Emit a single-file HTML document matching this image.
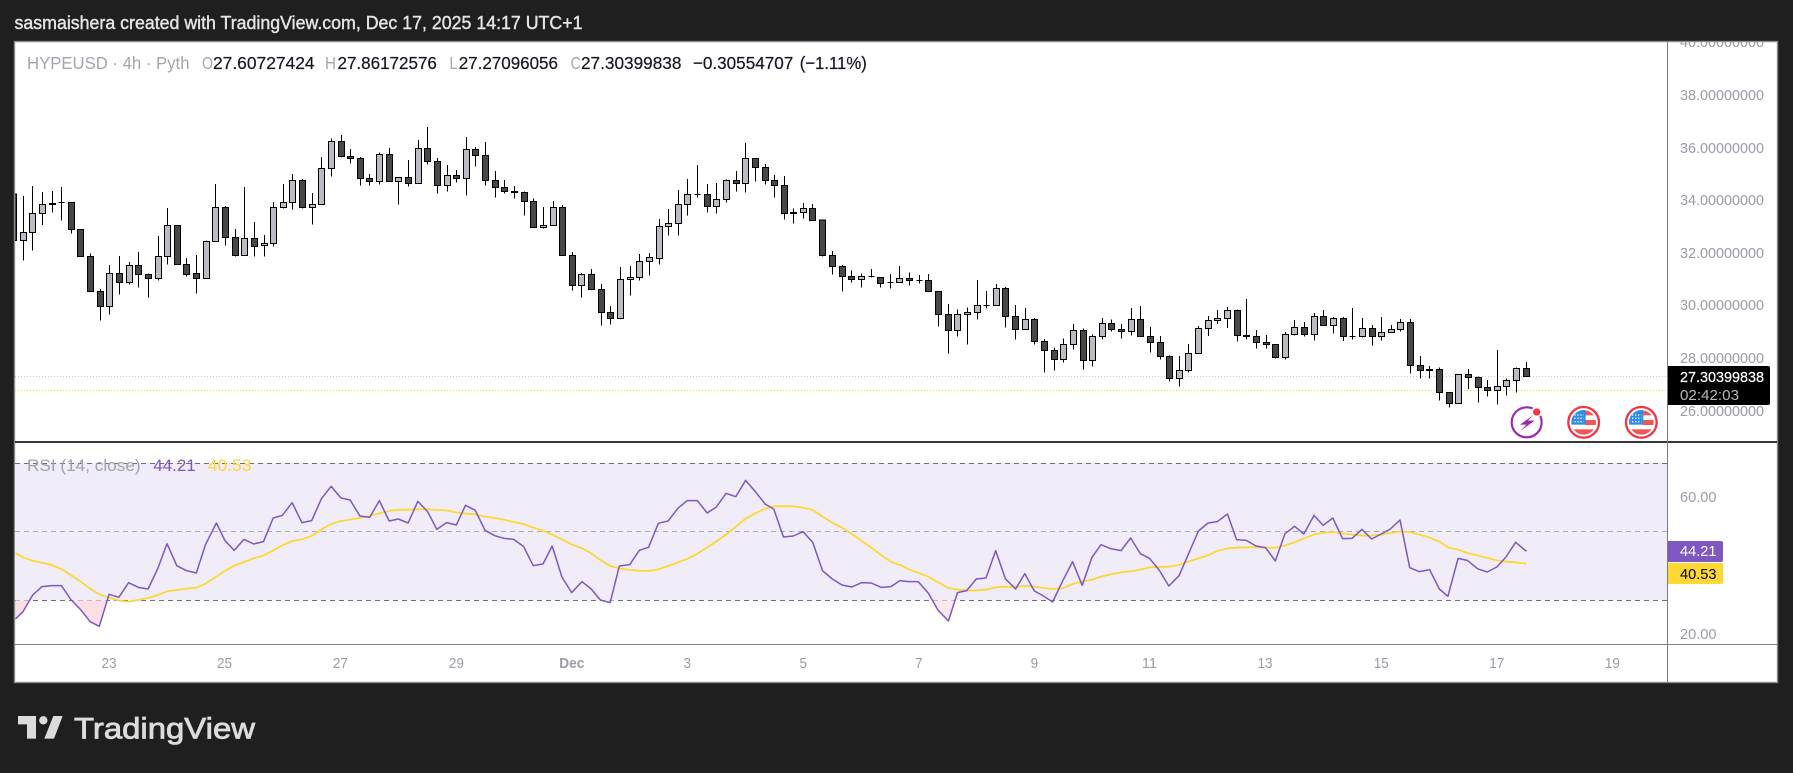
<!DOCTYPE html>
<html lang="en"><head><meta charset="utf-8"><title>HYPEUSD chart</title>
<style>
html,body{margin:0;padding:0;background:#1f1f1f;width:1793px;height:773px;overflow:hidden}
svg{display:block}
text{font-family:"Liberation Sans",sans-serif}
.ax{font-size:15px;fill:#9a9ca6}
.lg{font-size:17.5px;fill:#a4a6af}
.v{font-size:17.5px;fill:#131722;stroke:#131722;stroke-width:.2}
.w{stroke:#000;stroke-width:3;fill:none}
.d{fill:#474747;stroke:#000;stroke-width:3}
.l{fill:#babbc4;stroke:#000;stroke-width:3}
.rsi{fill:none;stroke:#7e57c2;stroke-width:1.5;vector-effect:non-scaling-stroke;stroke-linejoin:round}
.ma{fill:none;stroke:#fdd835;stroke-width:1.8;vector-effect:non-scaling-stroke;stroke-linejoin:round}
</style></head><body>
<svg width="1793" height="773" viewBox="0 0 1793 773" xmlns="http://www.w3.org/2000/svg">
<defs>
<clipPath id="m"><rect x="15" y="42" width="1652" height="400"/></clipPath>
<clipPath id="r"><rect x="15" y="443" width="1652" height="201"/></clipPath>
<clipPath id="a"><rect x="1668" y="42" width="109" height="400"/></clipPath>
<clipPath id="f1"><circle cx="311" cy="247" r="37"/></clipPath>
<clipPath id="f2"><circle cx="484" cy="247" r="37"/></clipPath>
</defs>
<rect width="1793" height="773" fill="#1f1f1f"/>
<text x="14.5" y="29" font-size="18" font-weight="400" fill="#e6e6e6" stroke="#e6e6e6" stroke-width=".4" textLength="568" lengthAdjust="spacingAndGlyphs">sasmaishera created with TradingView.com, Dec 17, 2025 14:17 UTC+1</text>
<rect x="14.5" y="41.5" width="1763" height="641" fill="#fff" stroke="#8a8a8a" stroke-width="1.4"/>

<rect x="15" y="463" width="1652" height="137" fill="#f0edf8"/>
<g stroke-width="1" shape-rendering="crispEdges">
<line x1="15" x2="1667" y1="376.5" y2="376.5" stroke="#c8c8c8" stroke-dasharray="1 2"/>
<line x1="15" x2="1667" y1="390.5" y2="390.5" stroke="#f2e600" stroke-dasharray="1 2"/>
<line x1="15" x2="1667" y1="463.5" y2="463.5" stroke="#6f6d80" stroke-dasharray="5 4"/>
<line x1="15" x2="1667" y1="531.5" y2="531.5" stroke="#a9a9b5" stroke-dasharray="5 4"/>
<line x1="15" x2="1667" y1="600.5" y2="600.5" stroke="#6f6d80" stroke-dasharray="5 4"/>
</g>

<g clip-path="url(#m)" shape-rendering="crispEdges">
<g transform="translate(14 120) scale(.33333)">
<path class="w" d="M28 228V422M55 198V392M85 216V315M115 213V278M142 201V302M172 246V341M229 400V515M259 507V602M286 435V584M316 408V524M346 426V494M373 396V503M403 460V533M433 348V482M460 264V434M517 414V469M547 405V521M577 361V364M604 192V262M634 258V377M664 327V410M691 201V355M721 306V410M751 345V410M778 246V380M808 192V266M835 162V269M865 177V266M895 219V314M922 111V145M952 55V170M982 45V113M1009 87V131M1039 111V197M1066 162V197M1096 97V194M1126 84V184M1153 172V254M1183 120V200M133 247h18"/>
<path class="d" d="M-11 222h18V362h-18zM163 247h18V328h-18zM190 328h18V409h-18zM220 409h18V514h-18zM250 514h18V559h-18zM307 460h18V487h-18zM364 436h18V463h-18zM394 463h18V475h-18zM481 316h18V433h-18zM508 433h18V463h-18zM538 460h18V475h-18zM625 262h18V352h-18zM655 352h18V406h-18zM712 355h18V379h-18zM856 181h18V262h-18zM973 64h18V109h-18zM1000 109h18V115h-18zM1030 115h18V175h-18zM1057 175h18V184h-18zM1117 103h18V184h-18zM1174 172h18V190h-18zM106 251h18V253h-18z"/>
<path class="l" d="M19 337h18V361h-18zM46 280h18V337h-18zM76 253h18V280h-18zM277 460h18V559h-18zM337 436h18V487h-18zM424 409h18V475h-18zM451 316h18V409h-18zM568 364h18V475h-18zM595 262h18V364h-18zM682 355h18V406h-18zM742 371h18V376h-18zM769 262h18V370h-18zM799 247h18V262h-18zM826 181h18V247h-18zM886 253h18V262h-18zM913 145h18V253h-18zM943 64h18V145h-18zM1087 103h18V184h-18zM1144 172h18V184h-18z"/>
</g>
<g transform="translate(414 120) scale(.33333)">
<path class="w" d="M13 60V85M40 21V134M70 114V221M100 135V215M127 150V188M157 51V227M184 81V140M214 66V197M244 153V233M271 180V221M301 198V236M331 214V287M358 235V244M388 261V326M418 243V262M445 255V262M475 396V512M502 459V533M532 447V463M562 492V617M589 558V614M619 441V478M649 438V527M676 402V482M706 399V467M736 297V434M763 267V347M793 210V347M820 177V287M850 135V233M880 192V278M907 189V281M937 178V247M967 153V215M994 69V218M1024 115V185M1054 132V194M1081 165V233M1111 168V299M1138 265V311M1168 249V296M1195 252V265M841 223h18"/>
<path class="d" d="M31 85h18V124h-18zM61 124h18V196h-18zM118 166h18V175h-18zM175 88h18V106h-18zM205 106h18V181h-18zM235 181h18V202h-18zM262 202h18V214h-18zM292 215h18V217h-18zM322 217h18V244h-18zM349 244h18V322h-18zM436 262h18V406h-18zM466 406h18V496h-18zM523 463h18V508h-18zM553 508h18V577h-18zM580 577h18V595h-18zM871 223h18V259h-18zM958 181h18V190h-18zM1015 115h18V142h-18zM1045 142h18V181h-18zM1072 181h18V196h-18zM1102 196h18V280h-18zM1129 278h18V280h-18zM1186 265h18V301h-18z"/>
<path class="l" d="M4 85h18V190h-18zM91 166h18V196h-18zM148 88h18V175h-18zM379 316h18V322h-18zM409 262h18V316h-18zM493 463h18V496h-18zM610 478h18V595h-18zM640 472h18V478h-18zM667 424h18V472h-18zM697 412h18V424h-18zM727 319h18V415h-18zM754 310h18V319h-18zM784 253h18V310h-18zM811 223h18V253h-18zM898 238h18V259h-18zM928 181h18V238h-18zM985 115h18V190h-18zM1159 265h18V277h-18z"/>
</g>
<g transform="translate(814 240) scale(.33333)">
<path class="w" d="M25 -60V50M55 33V104M85 75V155M112 91V128M142 100V143M172 87V113M199 112V143M229 102V146M256 78V115M286 97V137M316 105V131M343 102V121M373 223V260M403 192V341M430 208V290M460 202V314M490 120V239M517 153V206M547 132V145M574 141V263M604 195V299M634 204V238M661 234V314M691 297V398M721 322V392M748 295V368M778 252V329M808 265V389M835 283V380M865 234V299M892 238V274M922 252V296M952 204V287M979 198V238M1009 261V338M1039 288V359M1066 346V425M1096 348V440M1123 312V398M1153 258V265M1183 228V288M163 110h18M220 127h18M307 121h18M508 196h18"/>
<path class="d" d="M16 -60h18V46h-18zM46 46h18V79h-18zM76 79h18V109h-18zM103 109h18V118h-18zM190 112h18V130h-18zM277 115h18V121h-18zM334 121h18V154h-18zM364 154h18V223h-18zM394 223h18V271h-18zM565 145h18V229h-18zM595 229h18V268h-18zM652 238h18V304h-18zM682 304h18V331h-18zM712 331h18V358h-18zM799 271h18V361h-18zM883 250h18V268h-18zM913 268h18V274h-18zM970 238h18V289h-18zM1000 289h18V307h-18zM1030 307h18V349h-18zM1057 349h18V415h-18z"/>
<path class="l" d="M133 109h18V118h-18zM247 115h18V127h-18zM421 223h18V271h-18zM451 217h18V223h-18zM481 196h18V217h-18zM538 145h18V196h-18zM625 238h18V268h-18zM739 313h18V358h-18zM769 271h18V313h-18zM826 289h18V361h-18zM856 250h18V289h-18zM943 238h18V274h-18zM1087 391h18V415h-18zM1114 340h18V391h-18zM1144 265h18V340h-18zM1174 241h18V265h-18z"/>
</g>
<g transform="translate(1214 280) scale(.33333)">
<path class="w" d="M10 90V132M40 81V144M70 88V185M97 57V179M127 150V206M157 165V206M184 193V236M214 156V239M241 120V167M271 126V170M301 99V182M328 90V109M358 111V161M388 111V183M415 84V179M445 114V172M475 135V197M502 111V182M532 135V158M559 117V155M589 117V281M619 228V296M646 258V296M676 262V362M706 337V383M733 283V370M763 267V327M793 289V368M820 300V350M850 210V374M877 295V347M907 262V338M937 246V290M406 169h18"/>
<path class="d" d="M61 91h18V166h-18zM88 166h18V170h-18zM118 169h18V187h-18zM148 187h18V193h-18zM175 193h18V233h-18zM262 142h18V163h-18zM319 109h18V136h-18zM379 115h18V169h-18zM466 145h18V169h-18zM580 127h18V256h-18zM610 256h18V271h-18zM637 268h18V271h-18zM667 268h18V337h-18zM697 337h18V370h-18zM754 283h18V292h-18zM784 292h18V322h-18zM811 322h18V331h-18zM928 265h18V289h-18z"/>
<path class="l" d="M1 115h18V122h-18zM31 91h18V115h-18zM205 163h18V233h-18zM232 142h18V163h-18zM292 109h18V163h-18zM349 115h18V136h-18zM436 145h18V169h-18zM493 157h18V169h-18zM523 148h18V157h-18zM550 127h18V148h-18zM724 283h18V370h-18zM841 319h18V331h-18zM868 301h18V319h-18zM898 265h18V301h-18z"/>
</g>
</g>

<g clip-path="url(#r)">
<g transform="translate(0 440) scale(.57398 .33333)">
<path fill="#fbdfe4" d="M27 481V537L40 515L52 481zM126 481L141 510L157 545L173 559L186 481zM1046 481L1063 488L1070 481z"/>
<polyline class="ma" points="27,340 40,352 57,362 73,368 90,375 107,387 124,406 141,425 157,446 173,463 190,473 207,482 224,485 241,480 258,474 275,465 291,454 308,450 325,446 342,443 358,431 377,410 392,393 408,377 425,366 442,355 459,347 476,331 492,316 509,303 526,298 543,288 560,268 577,252 594,243 610,239 627,234 644,228 661,220 678,213 694,209 711,209 728,208 745,208 761,210 778,211 795,217 811,221 828,223 845,230 862,234 878,239 895,246 912,252 929,263 946,272 962,284 979,298 996,313 1014,325 1030,340 1046,360 1063,378 1079,385 1097,390 1114,392 1130,393 1147,388 1164,378 1181,367 1197,357 1215,341 1232,322 1248,304 1265,284 1282,260 1299,236 1316,220 1333,206 1348,199 1365,198 1382,199 1399,203 1416,210 1433,230 1450,248 1467,263 1484,282 1501,302 1518,323 1535,345 1552,365 1568,376"/>
<polyline class="rsi" points="27,537 40,515 57,465 73,440 90,437 107,437 124,480 141,510 157,545 173,559 190,463 207,472 224,428 241,442 258,447 275,385 291,311 308,377 325,392 342,399 358,314 377,249 392,302 408,331 425,298 442,312 459,305 476,234 492,226 509,188 526,248 543,242 560,176 577,139 594,174 610,180 627,228 644,232 661,182 678,243 694,237 711,249 728,184 745,215 761,268 778,248 795,255 811,196 828,211 845,271 862,287 878,295 895,298 912,319 929,377 946,372 962,318 979,411 996,458 1014,425 1030,447 1046,480 1063,488 1079,378 1097,374 1114,331 1130,322 1147,250 1164,243 1181,205 1197,182 1215,182 1232,219 1248,201 1265,160 1282,170 1299,121 1316,155 1333,192 1348,207 1365,291 1382,288 1399,275 1416,307 1433,392 1450,417 1467,435 1484,441 1501,428 1518,429 1535,442 1552,440 1568,422"/>
</g>
<g transform="translate(900 440) scale(.56952 .33333)">
<path fill="#fde8ea" d="M57 481L67 511L85 543L96 481z"/>
<polyline class="ma" points="0,374 15,388 32,398 50,410 67,427 85,444 101,449 117,452 134,451 151,449 168,442 185,440 203,441 219,438 236,440 252,444 268,447 285,445 303,432 320,425 337,419 353,410 370,403 388,397 405,394 422,389 438,382 455,381 472,380 490,375 507,364 524,355 541,346 557,333 575,325 591,323 608,322 625,322 642,323 659,323 676,316 693,307 709,295 727,284 743,278 760,276 777,280 794,284 811,287 828,287 845,284 861,279 878,275 895,276 912,284 930,293 947,305 962,322 980,329 996,339 1014,346 1031,354 1048,361 1064,365 1081,367 1100,371"/>
<polyline class="rsi" points="0,422 15,425 32,425 50,460 67,511 85,543 101,458 117,452 134,417 151,414 168,332 185,416 203,447 219,401 236,453 252,468 268,486 285,425 303,365 320,436 337,352 353,314 370,326 388,332 405,294 422,341 438,355 455,390 472,438 490,407 507,340 524,273 541,249 557,245 575,222 591,299 608,301 625,318 642,323 659,363 676,281 693,259 709,282 727,226 743,256 760,234 777,296 794,295 811,268 828,297 845,282 861,267 878,240 895,383 912,395 930,389 947,447 962,469 980,355 996,361 1014,386 1031,396 1048,381 1064,351 1081,307 1100,334"/>
</g>
</g>

<g shape-rendering="crispEdges">
<rect x="15" y="441" width="1762" height="2" fill="#33363f"/>
<rect x="15" y="644" width="1762" height="1" fill="#7f7f86"/>
<rect x="1667" y="42" width="1" height="640" fill="#787b86"/>
</g>

<text class="lg" x="27" y="69" textLength="162.5" lengthAdjust="spacingAndGlyphs">HYPEUSD · 4h · Pyth</text>
<text class="lg" x="202" y="69" textLength="11" lengthAdjust="spacingAndGlyphs">O</text><text class="v" x="213" y="69" textLength="101.6" lengthAdjust="spacingAndGlyphs">27.60727424</text>
<text class="lg" x="325" y="69" textLength="11" lengthAdjust="spacingAndGlyphs">H</text><text class="v" x="337.5" y="69" textLength="99.4" lengthAdjust="spacingAndGlyphs">27.86172576</text>
<text class="lg" x="449.5" y="69" textLength="8" lengthAdjust="spacingAndGlyphs">L</text><text class="v" x="458.7" y="69" textLength="99.3" lengthAdjust="spacingAndGlyphs">27.27096056</text>
<text class="lg" x="570.6" y="69" textLength="10" lengthAdjust="spacingAndGlyphs">C</text><text class="v" x="581" y="69" textLength="100.4" lengthAdjust="spacingAndGlyphs">27.30399838</text>
<text class="v" x="692.9" y="69" textLength="100.4" lengthAdjust="spacingAndGlyphs">−0.30554707</text>
<text class="v" x="799.7" y="69" textLength="67.1" lengthAdjust="spacingAndGlyphs">(−1.11%)</text>

<g clip-path="url(#a)">
<text class="ax" x="1680" y="47" textLength="84" lengthAdjust="spacingAndGlyphs">40.00000000</text>
</g>
<text class="ax" x="1680" y="100" textLength="84" lengthAdjust="spacingAndGlyphs">38.00000000</text>
<text class="ax" x="1680" y="153" textLength="84" lengthAdjust="spacingAndGlyphs">36.00000000</text>
<text class="ax" x="1680" y="205" textLength="84" lengthAdjust="spacingAndGlyphs">34.00000000</text>
<text class="ax" x="1680" y="258" textLength="84" lengthAdjust="spacingAndGlyphs">32.00000000</text>
<text class="ax" x="1680" y="310" textLength="84" lengthAdjust="spacingAndGlyphs">30.00000000</text>
<text class="ax" x="1680" y="363" textLength="84" lengthAdjust="spacingAndGlyphs">28.00000000</text>
<text class="ax" x="1680" y="416" textLength="84" lengthAdjust="spacingAndGlyphs">26.00000000</text>
<path d="M1668 366H1768a2 2 0 0 1 2 2V403a2 2 0 0 1-2 2H1668z" fill="#000"/>
<text x="1680" y="382" font-size="15" fill="#fff" stroke="#fff" stroke-width=".2" textLength="84" lengthAdjust="spacingAndGlyphs">27.30399838</text>
<text x="1680" y="400" font-size="15" fill="#b9b9b9" textLength="59" lengthAdjust="spacingAndGlyphs">02:42:03</text>

<g transform="translate(1480 340) scale(.33333)">
<circle cx="140" cy="247" r="45" fill="none" stroke="#9c27b0" stroke-width="6.5"/>
<circle cx="170" cy="216" r="16" fill="#fff"/>
<circle cx="170" cy="216" r="11" fill="#f23645"/>
<path d="M159 226L120 254H139L122 272L164 242H144L159 226z" fill="#9c27b0"/>
<circle cx="311" cy="247" r="46" fill="#fff" stroke="#f23645" stroke-width="7"/>
<g clip-path="url(#f1)">
<rect x="270" y="208" width="82" height="80" fill="#fff"/>
<rect x="316" y="212" width="36" height="14" fill="#f05656"/>
<rect x="316" y="240" width="36" height="15" fill="#f05656"/>
<rect x="270" y="268" width="82" height="20" fill="#f05656"/>
<rect x="270" y="208" width="47" height="46" fill="#2d8ee8"/>
<path d="M283 225h28M283 235h28M283 245h28" stroke="#fff" stroke-width="4" stroke-dasharray="4 5" fill="none"/>
</g>
<circle cx="484" cy="247" r="46" fill="#fff" stroke="#f23645" stroke-width="7"/>
<g clip-path="url(#f2)">
<rect x="443" y="208" width="82" height="80" fill="#fff"/>
<rect x="489" y="212" width="36" height="14" fill="#f05656"/>
<rect x="489" y="240" width="36" height="15" fill="#f05656"/>
<rect x="443" y="268" width="82" height="20" fill="#f05656"/>
<rect x="443" y="208" width="47" height="46" fill="#2d8ee8"/>
<path d="M456 225h28M456 235h28M456 245h28" stroke="#fff" stroke-width="4" stroke-dasharray="4 5" fill="none"/>
</g>
</g>

<text x="27" y="471" font-size="16.5" fill="#a0a2ab" textLength="113.6" lengthAdjust="spacingAndGlyphs">RSI (14, close)</text>
<text x="153.3" y="471" font-size="16.5" fill="#7e57c2" textLength="42.5" lengthAdjust="spacingAndGlyphs">44.21</text>
<text x="207.8" y="471" font-size="16.5" fill="#fdd835" textLength="43.6" lengthAdjust="spacingAndGlyphs">40.53</text>

<text class="ax" x="1680" y="502" textLength="36.5" lengthAdjust="spacingAndGlyphs">60.00</text>
<text class="ax" x="1680" y="639" textLength="36.5" lengthAdjust="spacingAndGlyphs">20.00</text>
<path d="M1668 541H1721a2 2 0 0 1 2 2V560a2 2 0 0 1-2 2H1668z" fill="#7e57c2"/>
<text x="1680" y="556" font-size="15" fill="#fff" textLength="36.5" lengthAdjust="spacingAndGlyphs">44.21</text>
<path d="M1668 563H1721a2 2 0 0 1 2 2V582a2 2 0 0 1-2 2H1668z" fill="#fdd835"/>
<text x="1680" y="579" font-size="15" fill="#000" textLength="36.5" lengthAdjust="spacingAndGlyphs">40.53</text>

<g text-anchor="middle">
<text x="109" y="668" class="ax" textLength="15" lengthAdjust="spacingAndGlyphs">23</text>
<text x="224.5" y="668" class="ax" textLength="15" lengthAdjust="spacingAndGlyphs">25</text>
<text x="340.4" y="668" class="ax" textLength="15" lengthAdjust="spacingAndGlyphs">27</text>
<text x="456.4" y="668" class="ax" textLength="15" lengthAdjust="spacingAndGlyphs">29</text>
<text x="571.8" y="668" class="ax" font-weight="700" textLength="25" lengthAdjust="spacingAndGlyphs">Dec</text>
<text x="687.2" y="668" class="ax" textLength="7.5" lengthAdjust="spacingAndGlyphs">3</text>
<text x="803.2" y="668" class="ax" textLength="7.5" lengthAdjust="spacingAndGlyphs">5</text>
<text x="918.8" y="668" class="ax" textLength="7.5" lengthAdjust="spacingAndGlyphs">7</text>
<text x="1034.4" y="668" class="ax" textLength="7.5" lengthAdjust="spacingAndGlyphs">9</text>
<text x="1149.4" y="668" class="ax" textLength="15" lengthAdjust="spacingAndGlyphs">11</text>
<text x="1265" y="668" class="ax" textLength="15" lengthAdjust="spacingAndGlyphs">13</text>
<text x="1381.2" y="668" class="ax" textLength="15" lengthAdjust="spacingAndGlyphs">15</text>
<text x="1496.8" y="668" class="ax" textLength="15" lengthAdjust="spacingAndGlyphs">17</text>
<text x="1612.4" y="668" class="ax" textLength="15" lengthAdjust="spacingAndGlyphs">19</text>
</g>

<g transform="translate(0 700) scale(.33333)" fill="#dcdcdc">
<path d="M54 48H108V116H81V73H54z"/>
<circle cx="130" cy="61" r="12.5"/>
<path d="M160 48H188L162 116H133z"/>
</g>
<text x="74" y="738.5" font-size="30" fill="#dcdcdc" stroke="#dcdcdc" stroke-width=".8" textLength="181" lengthAdjust="spacingAndGlyphs">TradingView</text>
</svg>
</body></html>
